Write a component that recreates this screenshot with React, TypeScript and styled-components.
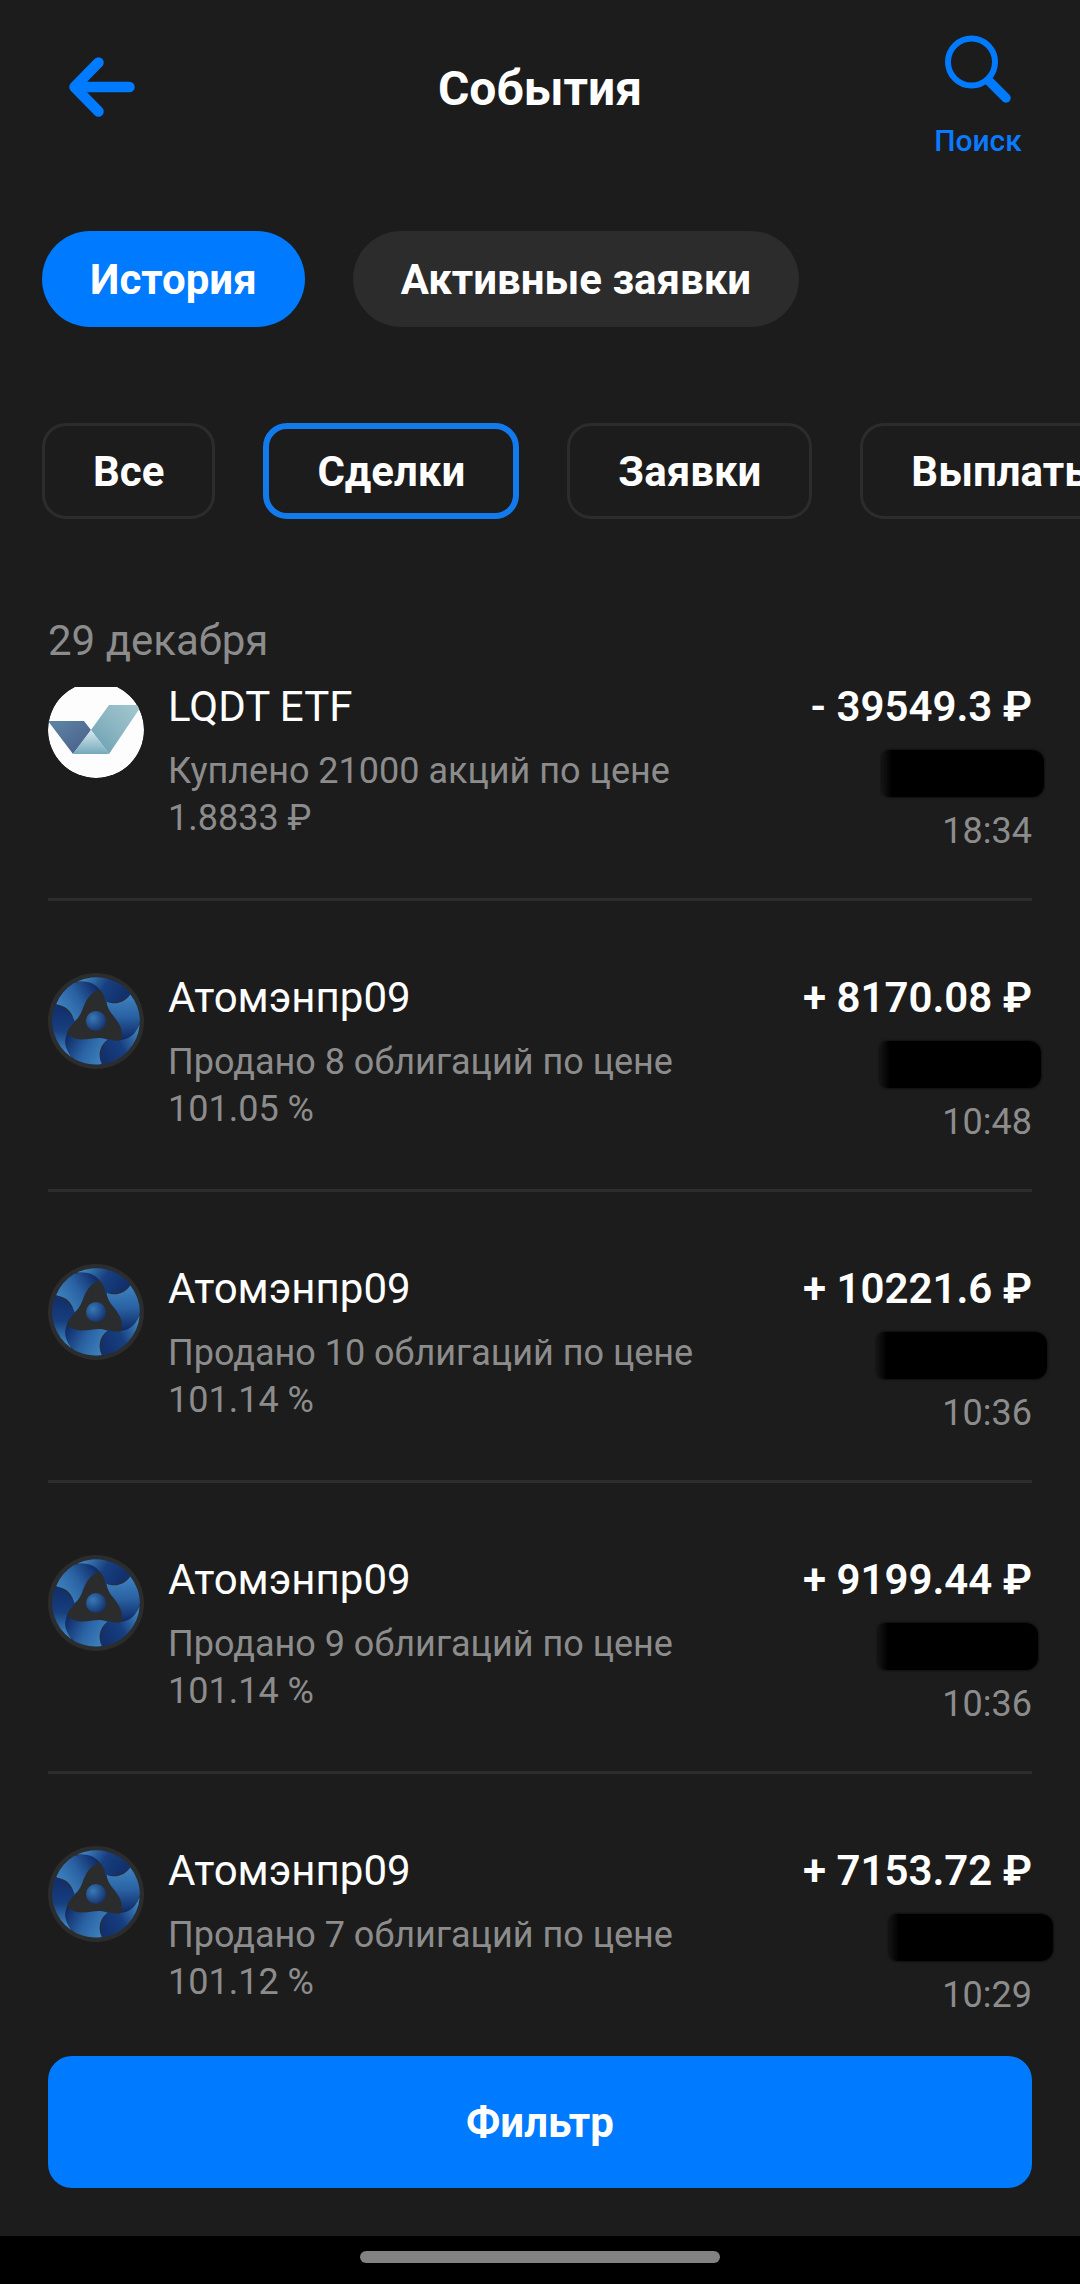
import * as React from "react"
import styled, { createGlobalStyle } from "styled-components"

const GlobalStyle = createGlobalStyle`
  * {
    box-sizing: border-box;
  }

  body {
    margin: 0;
    background: #1c1c1c;
    color: #fff;
    font-family: Roboto, "Liberation Sans", sans-serif;
    overflow: hidden;
  }

  button {
    font: inherit;
    color: inherit;
    background: none;
    border: 0;
    padding: 0;
    cursor: pointer;
  }
`

const Screen = styled.div`
  display: flex;
  flex-direction: column;
  height: 100vh;
  overflow: hidden;
`

const Header = styled.header`
  display: grid;
  grid-template-columns: 120px 1fr 120px;
  align-items: start;
  padding: 34px 42px 0;
  height: 183px;
  flex: none;
`

const BackButton = styled.button`
  display: flex;
  align-items: center;
  justify-content: center;
  height: 106px;
`

const Title = styled.h1`
  margin: 0;
  font-size: 48px;
  line-height: 110px;
  font-weight: 700;
  text-align: center;
`

const SearchButton = styled.button`
  display: flex;
  flex-direction: column;
  align-items: center;
  gap: 19px;
  color: #0a7aff;
  font-size: 30px;
  line-height: 36px;
  font-weight: 500;
`

const Tabs = styled.nav`
  display: flex;
  gap: 48px;
  padding: 48px 42px 0;
  flex: none;
`

const Tab = styled.button<{ $active?: boolean }>`
  height: 96px;
  padding: 2px 48px 0;
  border-radius: 48px;
  background: ${({ $active }) => ($active ? "#007aff" : "#2c2c2c")};
  font-size: 42px;
  line-height: 48px;
  font-weight: 700;
  white-space: nowrap;
`

const Chips = styled.div`
  display: flex;
  gap: 48px;
  padding: 96px 0 0 42px;
  overflow: hidden;
  flex: none;
`

const Chip = styled.button<{ $active?: boolean }>`
  flex: none;
  height: 96px;
  padding: 2px 48px 0;
  border: ${({ $active }) => ($active ? "6px solid #127aeb" : "3px solid #2c2c2c")};
  border-radius: 24px;
  font-size: 42px;
  line-height: 48px;
  font-weight: 700;
`

const DateTitle = styled.h2`
  margin: 0;
  padding: 92px 48px 16px;
  color: #8c8c8c;
  font-size: 42px;
  line-height: 60px;
  font-weight: 400;
  flex: none;
`

const EventScroll = styled.main`
  flex: 1;
  min-height: 0;
  padding: 0 48px;
  overflow: hidden;
`

// the list is scrolled a little under the date
const EventList = styled.ul`
  margin: -5px 0 0;
  padding: 0;
  list-style: none;
`

const EventItem = styled.li`
  display: flex;
  gap: 24px;
  height: 219px;
  margin-bottom: 72px;
  border-bottom: 3px solid #2c2c2c;

  &:last-child {
    border-bottom: 0;
  }
`

const Avatar = styled.svg`
  width: 96px;
  height: 96px;
  flex: none;
`

const EventInfo = styled.div`
  flex: 1;
`

const EventName = styled.div`
  font-size: 42px;
  line-height: 50px;
`

const EventText = styled.p`
  margin: 16px 0 0;
  max-width: 540px;
  color: #8c8c8c;
  font-size: 36px;
  line-height: 47px;
`

const EventSide = styled.div`
  display: flex;
  flex-direction: column;
  align-items: flex-end;
  white-space: nowrap;
`

const Amount = styled.div`
  font-size: 42px;
  line-height: 50px;
  font-weight: 600;
`

const HiddenAmount = styled.div<{ $width: number; $overhang: number }>`
  width: ${({ $width }) => $width}px;
  height: 47px;
  margin: 18px -${({ $overhang }) => $overhang}px 0 0;
  border-radius: 8px 12px 12px 8px;
  background: linear-gradient(90deg, #141414, #000 10px);
  box-shadow: 0 0 3px #000;
`

const Time = styled.time`
  margin-top: 11px;
  color: #8c8c8c;
  font-size: 36px;
  line-height: 47px;
`

const Footer = styled.footer`
  padding: 0 48px 48px;
  flex: none;
`

const FilterButton = styled.button`
  width: 100%;
  height: 132px;
  padding-top: 2px;
  border-radius: 24px;
  background: #007aff;
  font-size: 42px;
  line-height: 48px;
  font-weight: 700;
`

const GestureBar = styled.div`
  display: flex;
  justify-content: center;
  height: 48px;
  padding-top: 15px;
  background: #000;
  flex: none;

  &::after {
    content: "";
    width: calc(100% / 3);
    height: 12px;
    border-radius: 6px;
    background: #828282;
  }
`

const BackIcon = () => (
  <svg width="66" height="60" viewBox="0 0 66 60" fill="none" stroke="#007aff" strokeWidth="10.5" strokeLinecap="round" strokeLinejoin="round">
    <path d="M29.5 5.5L5.5 30L29.5 54.5M7 30H60.5" />
  </svg>
)

const SearchIcon = () => (
  <svg width="68" height="70" viewBox="0 0 68 70" fill="none" stroke="#007aff" strokeLinecap="round">
    <circle cx="27.5" cy="28" r="23.5" strokeWidth="6" />
    <path d="M45 47L62 64" strokeWidth="9.5" />
  </svg>
)

const FundLogo = () => (
  <Avatar viewBox="0 0 96 96">
    <defs>
      <linearGradient id="fund-left" x1="0" y1="0" x2="1" y2="1">
        <stop offset="0" stopColor="#5d87a3" />
        <stop offset="1" stopColor="#4a5b8c" />
      </linearGradient>
      <linearGradient id="fund-right" x1="1" y1="0" x2="0" y2="1">
        <stop offset="0" stopColor="#a5c9cf" />
        <stop offset="0.5" stopColor="#8bb5c2" />
        <stop offset="1" stopColor="#669eae" />
      </linearGradient>
      <linearGradient id="fund-mid" x1="0" y1="0" x2="0" y2="1">
        <stop offset="0" stopColor="#d6e9ef" />
        <stop offset="1" stopColor="#74a9bb" />
      </linearGradient>
      <clipPath id="fund-clip">
        <circle cx="48" cy="48" r="48" />
      </clipPath>
    </defs>
    <g clipPath="url(#fund-clip)">
      <circle cx="48" cy="48" r="48" fill="#fdfdfd" />
      <path d="M0 39H36L43 48L25 72Z" fill="url(#fund-left)" />
      <path d="M43 48L61 23H94L61 72Z" fill="url(#fund-right)" />
      <path d="M43 48L61 72H25Z" fill="url(#fund-mid)" />
    </g>
  </Avatar>
)

const AtomLogo = () => (
  <Avatar viewBox="0 0 96 96">
    <defs>
      <linearGradient id="atom-arm" gradientUnits="userSpaceOnUse" x1="10" y1="36" x2="48" y2="12">
        <stop offset="0" stopColor="#3f84c0" />
        <stop offset="0.5" stopColor="#2a62a3" />
        <stop offset="1" stopColor="#0f2a66" />
      </linearGradient>
      <linearGradient id="atom-blade" gradientUnits="userSpaceOnUse" x1="38" y1="4" x2="74" y2="26">
        <stop offset="0" stopColor="#3d80b9" />
        <stop offset="0.5" stopColor="#173f80" />
        <stop offset="1" stopColor="#12306c" />
      </linearGradient>
      <radialGradient id="atom-core" cx="0.35" cy="0.35" r="0.7">
        <stop offset="0" stopColor="#3979b7" />
        <stop offset="1" stopColor="#143470" />
      </radialGradient>
    </defs>
    <circle cx="48" cy="48" r="48" fill="#2b2c2e" />
    {[0, 120, 240].map((angle) => (
      <g key={angle} transform={`rotate(${angle} 48 48)`}>
        <path d="M29 8.5A44 44 0 0 1 83 21.5C76 28 67 30.5 57.5 29.5C57 20 49 8 29 8.5Z" fill="url(#atom-blade)" />
        <path d="M8 31.5A44 44 0 0 1 26 10C38 6 48 10 51 17C41 20 38 28 35 35C33 41 30 46 26 48.5C25 40 19 32.5 8 31.5Z" fill="url(#atom-arm)" />
      </g>
    ))}
    <circle cx="48" cy="48" r="10" fill="url(#atom-core)" />
  </Avatar>
)

const events = [
  { name: "LQDT ETF", text: "Куплено 21000 акций по цене 1.8833 ₽", amount: "- 39549.3 ₽", time: "18:34", logo: FundLogo, width: 162, overhang: 12 },
  { name: "Атомэнпр09", text: "Продано 8 облигаций по цене 101.05 %", amount: "+ 8170.08 ₽", time: "10:48", logo: AtomLogo, width: 161, overhang: 9 },
  { name: "Атомэнпр09", text: "Продано 10 облигаций по цене 101.14 %", amount: "+ 10221.6 ₽", time: "10:36", logo: AtomLogo, width: 170, overhang: 15 },
  { name: "Атомэнпр09", text: "Продано 9 облигаций по цене 101.14 %", amount: "+ 9199.44 ₽", time: "10:36", logo: AtomLogo, width: 160, overhang: 6 },
  { name: "Атомэнпр09", text: "Продано 7 облигаций по цене 101.12 %", amount: "+ 7153.72 ₽", time: "10:29", logo: AtomLogo, width: 164, overhang: 21 },
]

const App = () => {
  const [tab, setTab] = React.useState("История")
  const [chip, setChip] = React.useState("Сделки")

  return (
    <Screen>
      <GlobalStyle />
      <Header>
        <BackButton aria-label="Назад">
          <BackIcon />
        </BackButton>
        <Title>События</Title>
        <SearchButton>
          <SearchIcon />
          Поиск
        </SearchButton>
      </Header>
      <Tabs>
        {["История", "Активные заявки"].map((name) => (
          <Tab key={name} $active={name === tab} onClick={() => setTab(name)}>
            {name}
          </Tab>
        ))}
      </Tabs>
      <Chips>
        {["Все", "Сделки", "Заявки", "Выплаты"].map((name) => (
          <Chip key={name} $active={name === chip} onClick={() => setChip(name)}>
            {name}
          </Chip>
        ))}
      </Chips>
      <DateTitle>29 декабря</DateTitle>
      <EventScroll>
        <EventList>
          {events.map(({ logo: Logo, ...event }, index) => (
            <EventItem key={index}>
              <Logo />
              <EventInfo>
                <EventName>{event.name}</EventName>
                <EventText>{event.text}</EventText>
              </EventInfo>
              <EventSide>
                <Amount>{event.amount}</Amount>
                <HiddenAmount $width={event.width} $overhang={event.overhang} />
                <Time>{event.time}</Time>
              </EventSide>
            </EventItem>
          ))}
        </EventList>
      </EventScroll>
      <Footer>
        <FilterButton>Фильтр</FilterButton>
      </Footer>
      <GestureBar />
    </Screen>
  )
}

export default App
